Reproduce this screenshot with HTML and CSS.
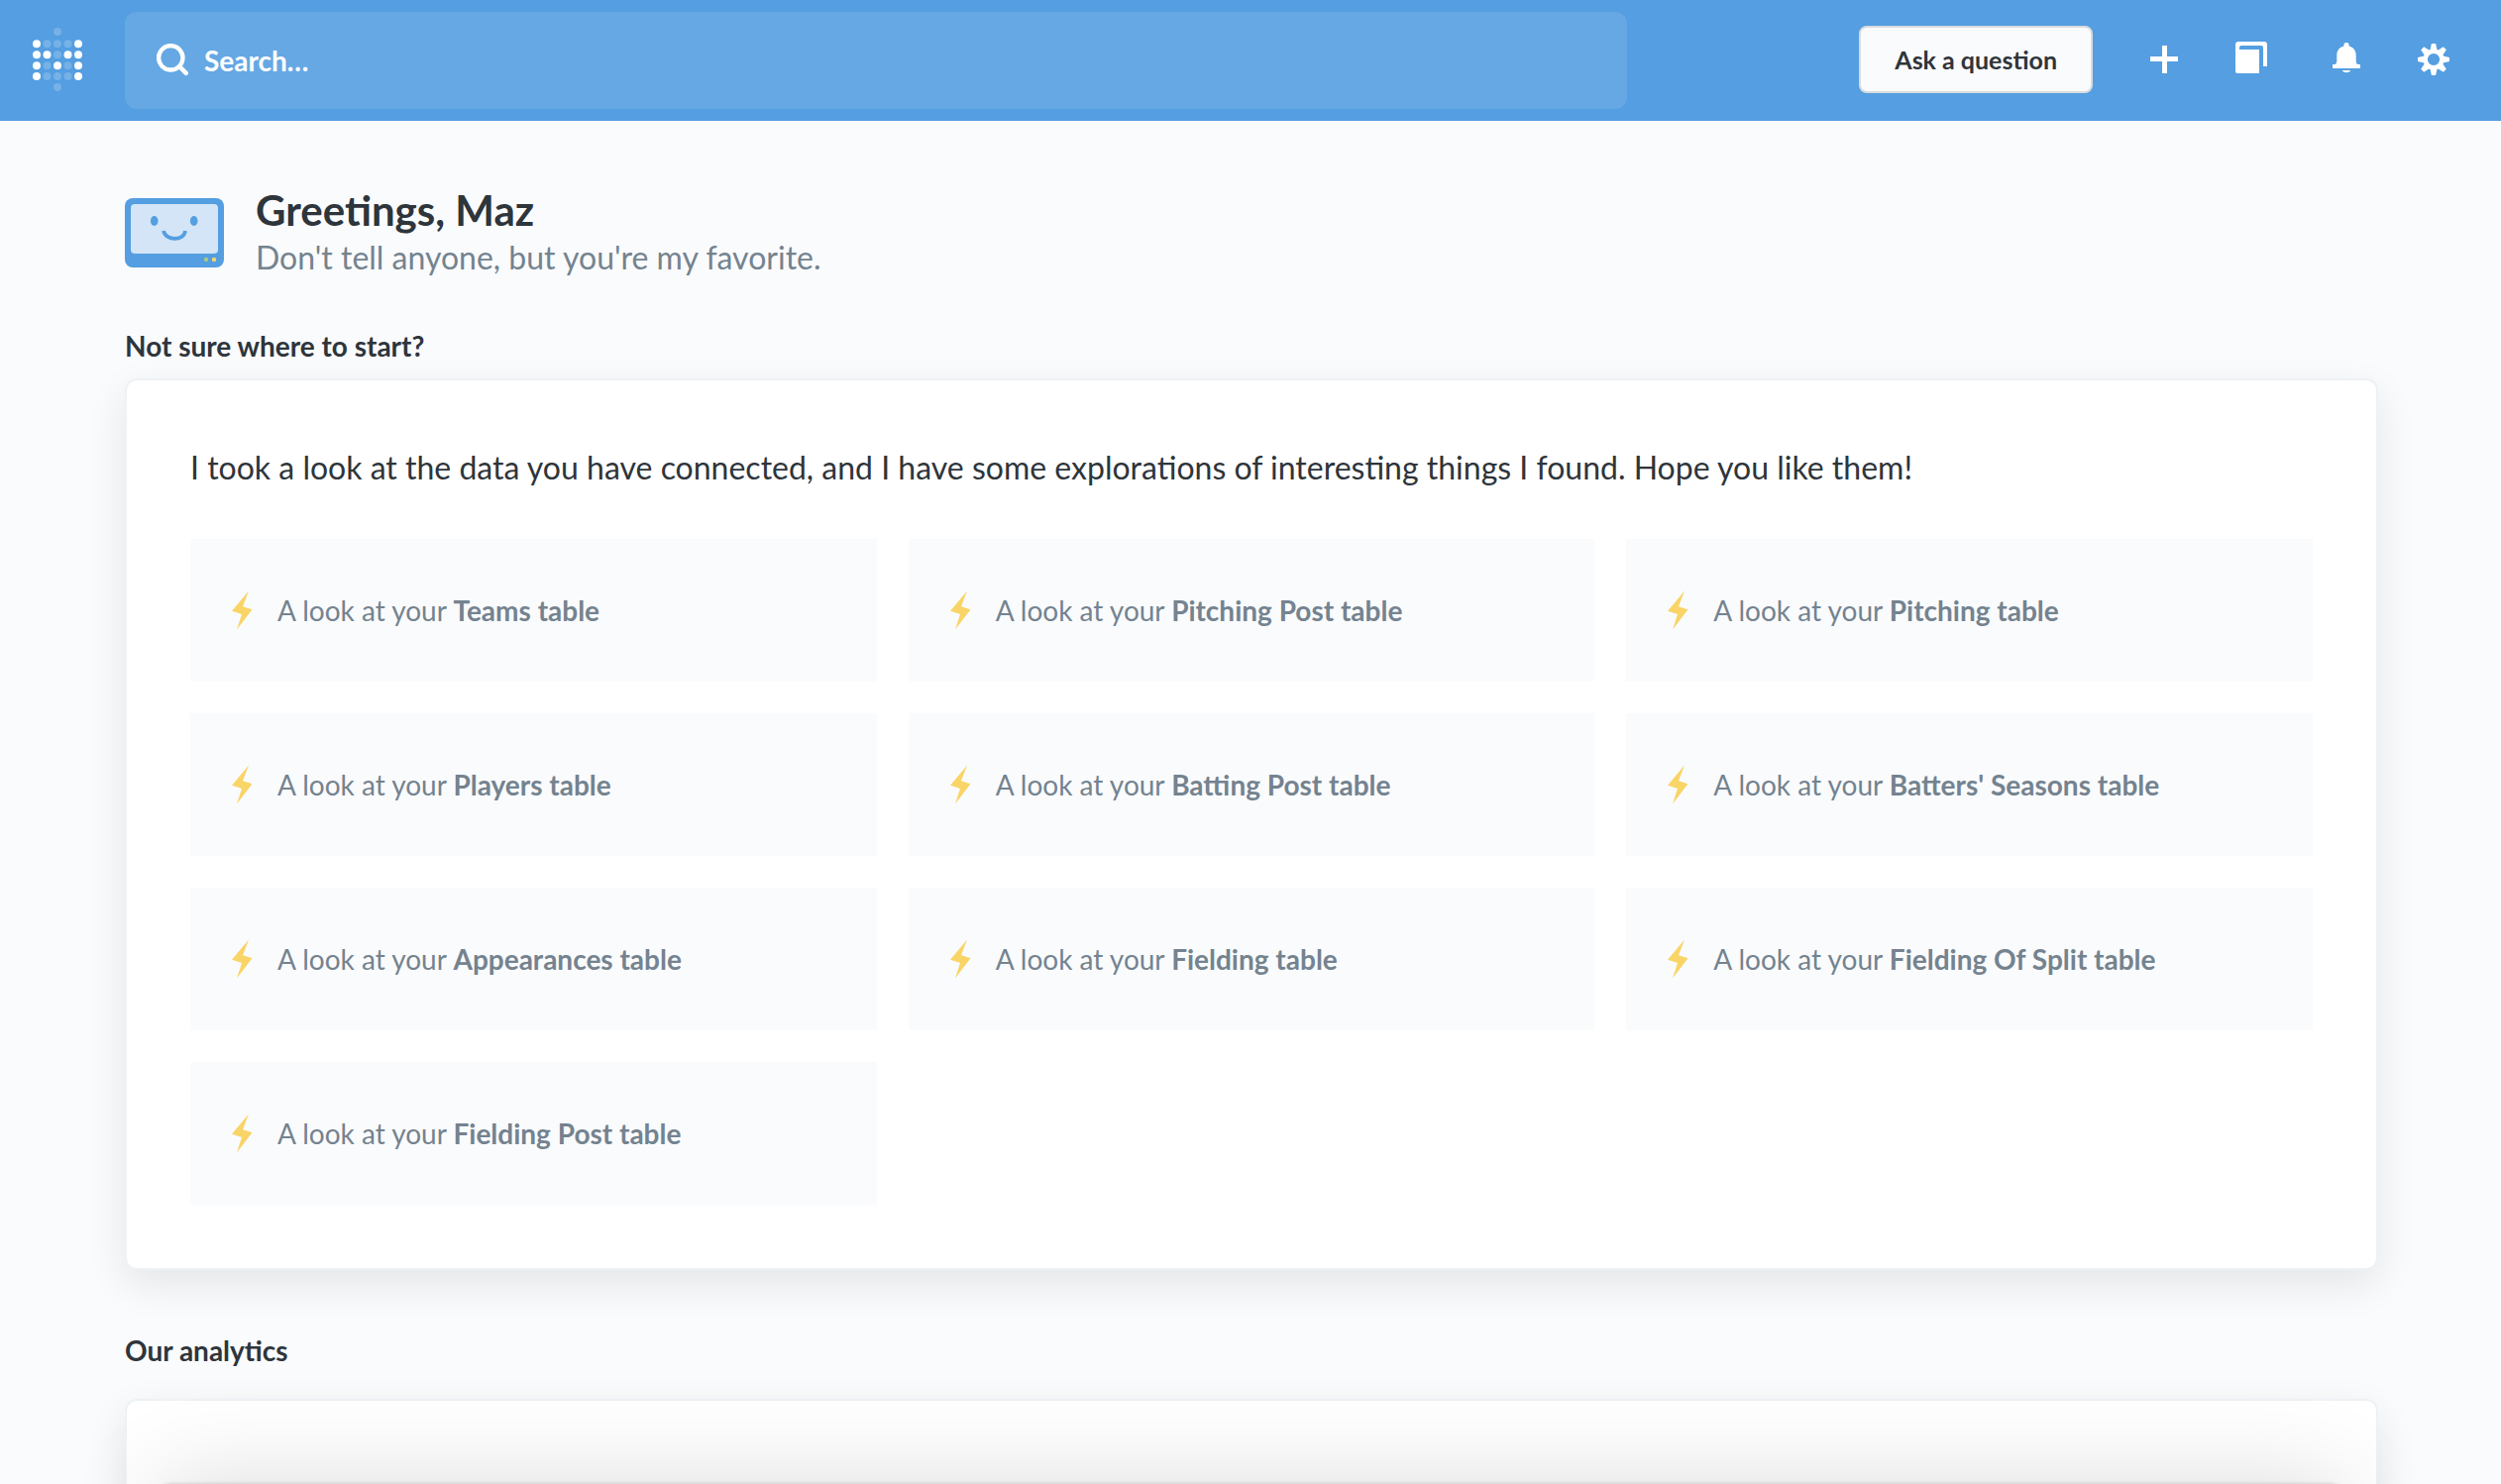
FILE: index.html
```html
<!DOCTYPE html>
<html lang="en">
<head>
<meta charset="utf-8">
<title>Home</title>
<link rel="stylesheet" href="styles.css">
</head>
<body>
<svg width="0" height="0" class="defs" aria-hidden="true">
  <symbol id="bolt" viewBox="0 0 40 40"><path d="M27 .5 21 16.300 30.500 19.300 15 39.500 20 24 10 20.700z" fill="#f9d466"/></symbol>
</svg>
<header class="nav">
  <a class="logo" href="#" aria-label="Home">
    <svg width="50" height="64" viewBox="0 0 50 64" fill="#fff">
      <g opacity=".2"><circle cx="25" cy="4" r="4"/><circle cx="14.500" cy="16.300" r="4"/><circle cx="25" cy="16.300" r="4"/><circle cx="35.500" cy="16.300" r="4"/><circle cx="25" cy="27.300" r="4"/><circle cx="14.500" cy="38.300" r="4"/><circle cx="35.500" cy="38.300" r="4"/><circle cx="14.500" cy="49" r="4"/><circle cx="25" cy="49" r="4"/><circle cx="35.500" cy="49" r="4"/><circle cx="25" cy="60" r="4"/></g>
      <circle cx="4" cy="16.300" r="4"/><circle cx="46" cy="16.300" r="4"/><circle cx="4" cy="27.300" r="4"/><circle cx="14.500" cy="27.300" r="4"/><circle cx="35.500" cy="27.300" r="4"/><circle cx="46" cy="27.300" r="4"/><circle cx="4" cy="38.300" r="4"/><circle cx="25" cy="38.300" r="4"/><circle cx="46" cy="38.300" r="4"/><circle cx="4" cy="49" r="4"/><circle cx="46" cy="49" r="4"/>
    </svg>
  </a>
  <label class="search">
    <svg width="32" height="34" viewBox="0 0 32 34" fill="none" stroke="#fff"><circle cx="14.300" cy="14.300" r="12.200" stroke-width="4.300"/><path d="M23.500 23.500 29.800 29.800" stroke-width="4.500" stroke-linecap="round"/></svg>
    <input class="search-input" type="text" placeholder="Search…" aria-label="Search">
  </label>
  <div class="actions">
    <button class="ask" type="button">Ask a question</button>
    <button class="icon" type="button" aria-label="Create">
      <svg width="32" height="36" viewBox="-2 0 32 36" fill="#fff"><path d="M12 4h5v11h11v5H17v12h-5V20H0v-5h12z"/></svg>
    </button>
    <button class="icon" type="button" aria-label="Browse data">
      <svg width="32" height="36" viewBox="0 0 32 36" fill="#fff"><path d="M3 0h26a3 3 0 0 1 3 3v22h-4V6a2 2 0 0 0-2-2H6a2 2 0 0 0-2 2v2h20v24H2a2 2 0 0 1-2-2V3a3 3 0 0 1 3-3z"/></svg>
    </button>
    <button class="icon bell" type="button" aria-label="Notifications">
      <svg width="32" height="36" viewBox="-2 0 32 36" fill="#fff"><path d="M14 1a2.500 2.500 0 0 1 2.400 3.600C21 5.500 23.700 9 23.700 14v5q0 4 2.500 4H28v4H0v-4h1.800q2.500 0 2.500-4v-5C4.300 9 7 5.500 11.600 4.600A2.500 2.500 0 0 1 14 1zM9.600 29h8.800q-1.400 2.300-4.400 2.300T9.600 29z"/></svg>
    </button>
    <button class="icon" type="button" aria-label="Settings">
      <svg width="32" height="36" viewBox="-16 -18 32 36" fill="#fff">
        <circle r="8.300" fill="none" stroke="#fff" stroke-width="4.400"/>
        <path id="tooth" d="M-3.500-9.500-2.100-16h4.200L3.500-9.500z"/>
        <use href="#tooth" transform="rotate(45)"/><use href="#tooth" transform="rotate(90)"/><use href="#tooth" transform="rotate(135)"/><use href="#tooth" transform="rotate(180)"/><use href="#tooth" transform="rotate(225)"/><use href="#tooth" transform="rotate(270)"/><use href="#tooth" transform="rotate(315)"/>
      </svg>
    </button>
  </div>
</header>
<main class="page">
  <section class="greeting">
    <svg width="100" height="70" viewBox="0 0 100 70" aria-hidden="true">
      <rect width="100" height="70" rx="8" fill="#549ee1"/>
      <rect x="6" y="6" width="88" height="50" rx="4" fill="#d3e5f6"/>
      <g fill="#549ee1"><ellipse cx="29.700" cy="23" rx="3.800" ry="5"/><ellipse cx="69.700" cy="23" rx="3.800" ry="5"/></g>
      <path d="M39 33C41 43.400 60 43.400 61 33" fill="none" stroke="#549ee1" stroke-width="3.700"/>
      <circle cx="82" cy="62" r="2.200" fill="#a8c987"/><circle cx="90" cy="62" r="2.200" fill="#f9d466"/>
    </svg>
    <div class="greeting-text">
      <h1 class="hello">Greetings, Maz</h1>
      <p class="sub">Don't tell anyone, but you're my favorite.</p>
    </div>
  </section>
  <section class="block">
    <h2 class="title">Not sure where to start?</h2>
    <div class="card">
      <p class="intro">I took a look at the data you have connected, and I have some explorations of interesting things I found. Hope you like them!</p>
      <div class="grid">
        <a class="tile" href="#"><svg class="bolt"><use href="#bolt"/></svg><span>A look at your <b>Teams table</b></span></a>
        <a class="tile" href="#"><svg class="bolt"><use href="#bolt"/></svg><span>A look at your <b>Pitching Post table</b></span></a>
        <a class="tile" href="#"><svg class="bolt"><use href="#bolt"/></svg><span>A look at your <b>Pitching table</b></span></a>
        <a class="tile" href="#"><svg class="bolt"><use href="#bolt"/></svg><span>A look at your <b>Players table</b></span></a>
        <a class="tile" href="#"><svg class="bolt"><use href="#bolt"/></svg><span>A look at your <b>Batting Post table</b></span></a>
        <a class="tile" href="#"><svg class="bolt"><use href="#bolt"/></svg><span>A look at your <b>Batters' Seasons table</b></span></a>
        <a class="tile" href="#"><svg class="bolt"><use href="#bolt"/></svg><span>A look at your <b>Appearances table</b></span></a>
        <a class="tile" href="#"><svg class="bolt"><use href="#bolt"/></svg><span>A look at your <b>Fielding table</b></span></a>
        <a class="tile" href="#"><svg class="bolt"><use href="#bolt"/></svg><span>A look at your <b>Fielding Of Split table</b></span></a>
        <a class="tile" href="#"><svg class="bolt"><use href="#bolt"/></svg><span>A look at your <b>Fielding Post table</b></span></a>
      </div>
    </div>
  </section>
  <section class="block">
    <h2 class="title title-spaced">Our analytics</h2>
    <div class="card card-list"></div>
  </section>
</main>
<div class="sheet"></div>
</body>
</html>
```

FILE: styles.css
```css
* { box-sizing: border-box; }
body {
  margin: 0;
  height: 100vh;
  overflow: hidden;
  background: #fafbfd;
  color: #2e353b;
  font-family: Lato, sans-serif;
  font-size: 28px;
  line-height: 34px;
}
h1, h2, p { margin: 0; }
svg { display: block; flex: none; }
.defs { position: absolute; }

/* Top bar */
.nav {
  display: flex;
  align-items: center;
  padding: 12px 52px 12px 33px;
  background: #549ee1;
}
.logo { flex: none; width: 93px; padding-bottom: 2px; }
.search {
  display: flex;
  align-items: center;
  gap: 16px;
  flex: 0 1 1516px;
  height: 98px;
  padding: 0 32px;
  border-radius: 12px;
  background: #65a8e4;
}
.search-input {
  flex: 1;
  min-width: 0;
  border: 0;
  padding: 0;
  background: none;
  outline: 0;
  font: bold 28px/34px Lato, sans-serif;
  color: #fff;
}
.search-input::placeholder { color: #fff; opacity: 1; }
.actions {
  display: flex;
  align-items: center;
  gap: 56px;
  margin-left: auto;
  padding-bottom: 2px;
}
.ask {
  height: 68px;
  padding: 0 34px;
  border: 2px solid #d9dcde;
  border-radius: 8px;
  background: #fafbfd;
  color: #2e353b;
  font: bold 25px/30px Lato, sans-serif;
  white-space: nowrap;
}
.icon { padding: 0; border: 0; background: none; }
.bell { margin-left: 8px; }

/* Page */
.page { padding: 68px 124px 64px 126px; }
.greeting { display: flex; align-items: center; gap: 32px; margin-bottom: 52px; }
.hello { margin-bottom: 6px; font-size: 42px; line-height: 44px; }
.sub { font-size: 32px; line-height: 40px; color: #74838f; }
.block { margin-bottom: 64px; }
.title { margin-bottom: 16px; font-size: 28px; line-height: 34px; }
.title-spaced { margin-bottom: 32px; }
.card {
  padding: 64px;
  border: 2px solid #edf2f5;
  border-radius: 12px;
  background: #fff;
  box-shadow: 0 14px 40px rgba(0, 0, 0, .09);
}
.card-list { min-height: 240px; }
.intro { margin-bottom: 48px; font-size: 32px; line-height: 48px; }
.grid { display: grid; grid-template-columns: repeat(3, 1fr); gap: 32px; }
.tile {
  display: flex;
  align-items: center;
  gap: 16px;
  min-height: 144px;
  padding: 32px;
  background: #fafbfd;
  color: #74838f;
  text-decoration: none;
}
.bolt { width: 40px; height: 40px; }

/* Sheet waiting below the window edge; only its shadow shows */
.sheet {
  position: fixed;
  top: 100vh;
  left: 160px;
  right: 160px;
  height: 400px;
  border-radius: 12px;
  box-shadow: 0 0 4px rgba(0, 0, 0, .2), 0 0 96px rgba(0, 0, 0, .15);
}
```
